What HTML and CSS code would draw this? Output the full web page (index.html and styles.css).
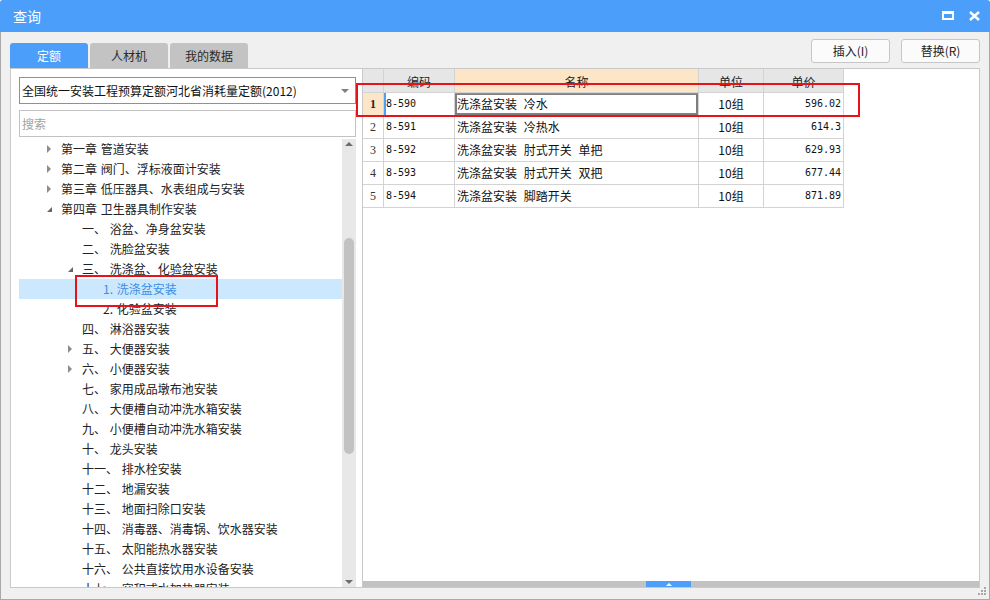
FILE: index.html
```html
<!DOCTYPE html>
<html lang="zh-CN">
<head>
<meta charset="utf-8">
<title>查询</title>
<link rel="stylesheet" href="styles.css">
</head>
<body>
<div class="window">
  <div class="titlebar">
    <span class="title">查询</span>
    <div class="wctrls">
      <svg class="ic-max" width="12" height="9" viewBox="0 0 12 9"><rect x="1" y="1" width="10" height="7" fill="none" stroke="#fff" stroke-width="2"/><rect x="0" y="0" width="12" height="3" fill="#fff"/></svg>
      <svg class="ic-close" width="11" height="10" viewBox="0 0 11 10"><path d="M1 1 L10 9 M10 1 L1 9" stroke="#fff" stroke-width="2.4" fill="none"/></svg>
    </div>
  </div>
  <div class="body">
    <div class="toolbar">
      <div class="tabs">
        <div class="tab active">定额</div>
        <div class="tab">人材机</div>
        <div class="tab">我的数据</div>
      </div>
      <div class="buttons">
        <button class="btn">插入(I)</button>
        <button class="btn">替换(R)</button>
      </div>
    </div>
    <div class="main">
      <div class="left">
        <div class="select"><span>全国统一安装工程预算定额河北省消耗量定额(2012)</span><i class="caret"></i></div>
        <div class="search">搜索</div>
        <div class="treewrap">
          <div class="tree">
            <div class="row l0"><i class="tg col"></i><span>第一章 管道安装</span></div>
            <div class="row l0"><i class="tg col"></i><span>第二章 阀门、浮标液面计安装</span></div>
            <div class="row l0"><i class="tg col"></i><span>第三章 低压器具、水表组成与安装</span></div>
            <div class="row l0"><i class="tg exp"></i><span>第四章 卫生器具制作安装</span></div>
            <div class="row l1"><i class="tg"></i><span>一、 浴盆、净身盆安装</span></div>
            <div class="row l1"><i class="tg"></i><span>二、 洗脸盆安装</span></div>
            <div class="row l1"><i class="tg exp"></i><span>三、 洗涤盆、化验盆安装</span></div>
            <div class="row l2 selected"><i class="tg"></i><span>1. 洗涤盆安装</span></div>
            <div class="row l2"><i class="tg"></i><span>2. 化验盆安装</span></div>
            <div class="row l1"><i class="tg"></i><span>四、 淋浴器安装</span></div>
            <div class="row l1"><i class="tg col"></i><span>五、 大便器安装</span></div>
            <div class="row l1"><i class="tg col"></i><span>六、 小便器安装</span></div>
            <div class="row l1"><i class="tg"></i><span>七、 家用成品墩布池安装</span></div>
            <div class="row l1"><i class="tg"></i><span>八、 大便槽自动冲洗水箱安装</span></div>
            <div class="row l1"><i class="tg"></i><span>九、 小便槽自动冲洗水箱安装</span></div>
            <div class="row l1"><i class="tg"></i><span>十、 龙头安装</span></div>
            <div class="row l1"><i class="tg"></i><span>十一、 排水栓安装</span></div>
            <div class="row l1"><i class="tg"></i><span>十二、 地漏安装</span></div>
            <div class="row l1"><i class="tg"></i><span>十三、 地面扫除口安装</span></div>
            <div class="row l1"><i class="tg"></i><span>十四、 消毒器、消毒锅、饮水器安装</span></div>
            <div class="row l1"><i class="tg"></i><span>十五、 太阳能热水器安装</span></div>
            <div class="row l1"><i class="tg"></i><span>十六、 公共直接饮用水设备安装</span></div>
            <div class="row l1"><i class="tg"></i><span>十七、 容积式水加热器安装</span></div>
          </div>
          <div class="vscroll">
            <i class="sb-up"></i>
            <div class="thumb"></div>
            <i class="sb-down"></i>
          </div>
        </div>
      </div>
      <div class="right">
        <div class="grid">
          <div class="hd"></div>
          <div class="hd">编码</div>
          <div class="hd hd-active">名称</div>
          <div class="hd">单位</div>
          <div class="hd">单价</div>

          <div class="c num cur">1</div>
          <div class="c code focus">8-590</div>
          <div class="c name sel">洗涤盆安装 冷水</div>
          <div class="c unit">10组</div>
          <div class="c price">596.02</div>

          <div class="c num">2</div>
          <div class="c code">8-591</div>
          <div class="c name">洗涤盆安装 冷热水</div>
          <div class="c unit">10组</div>
          <div class="c price">614.3</div>

          <div class="c num">3</div>
          <div class="c code">8-592</div>
          <div class="c name">洗涤盆安装 肘式开关 单把</div>
          <div class="c unit">10组</div>
          <div class="c price">629.93</div>

          <div class="c num">4</div>
          <div class="c code">8-593</div>
          <div class="c name">洗涤盆安装 肘式开关 双把</div>
          <div class="c unit">10组</div>
          <div class="c price">677.44</div>

          <div class="c num">5</div>
          <div class="c code">8-594</div>
          <div class="c name">洗涤盆安装 脚踏开关</div>
          <div class="c unit">10组</div>
          <div class="c price">871.89</div>
        </div>
        <div class="hbar"><div class="handle"><i class="handle-tri"></i></div></div>
      </div>
    </div>
  </div>
  <svg class="grip" width="9" height="9" viewBox="0 0 9 9">
    <rect x="6" y="0" width="2" height="2" fill="#a8a8a8"/>
    <rect x="3" y="3" width="2" height="2" fill="#a8a8a8"/>
    <rect x="6" y="3" width="2" height="2" fill="#a8a8a8"/>
    <rect x="0" y="6" width="2" height="2" fill="#a8a8a8"/>
    <rect x="3" y="6" width="2" height="2" fill="#a8a8a8"/>
    <rect x="6" y="6" width="2" height="2" fill="#a8a8a8"/>
  </svg>
  <div class="mark mark-row"></div>
  <div class="mark mark-tree"></div>
</div>
</body>
</html>
```
FILE: styles.css
```css
* { box-sizing: border-box; margin: 0; padding: 0; }
html, body { width: 990px; height: 600px; overflow: hidden; }
body {
  font-family: "Noto Sans CJK SC", "Microsoft YaHei", sans-serif;
  font-size: 12px;
  color: #222;
  background: #f0f0f0;
}
.window {
  position: relative;
  width: 990px;
  height: 600px;
  display: flex;
  flex-direction: column;
}
.titlebar {
  height: 32px;
  flex: none;
  background: #4b9ef9;
  color: #fff;
  display: flex;
  align-items: center;
  justify-content: space-between;
  padding: 0 10px 0 13px;
  border-radius: 3px 3px 0 0;
}
.title { font-size: 14px; line-height: 32px; }
.wctrls { display: flex; align-items: center; gap: 15px; }
.ic-max { margin-top: -1px; }

.body {
  flex: 1;
  display: flex;
  flex-direction: column;
  background: #f0f0f0;
  border: 1px solid #a9a9a9;
  border-top: 0;
}
.toolbar {
  height: 36px;
  flex: none;
  display: flex;
  justify-content: space-between;
  padding: 0 9px 0 9px;
}
.tabs { display: flex; align-items: flex-end; gap: 2px; }
.tab {
  width: 78px;
  height: 25px;
  line-height: 25px;
  text-align: center;
  background: #c3c3c3;
  color: #2a2a2a;
  border-radius: 3px 3px 0 0;
}
.tab.active { background: #4b9ef9; color: #fff; }
.buttons { display: flex; gap: 11px; padding-top: 7px; }
.btn {
  width: 79px;
  height: 24px;
  border: 1px solid #c6c6c6;
  border-radius: 3px;
  background: #fbfbfb;
  font: inherit;
  color: #222;
  line-height: 22px;
  text-align: center;
}

.main {
  height: 520px;
  flex: none;
  margin: 0 9px;
  display: flex;
  border: 1px solid #c9c9c9;
  background: #fff;
}
.left {
  width: 352px;
  flex: none;
  border-right: 1px solid #c9c9c9;
  padding: 8px 6px 0 8px;
  display: flex;
  flex-direction: column;
}
.select {
  height: 27px;
  flex: none;
  border: 1px solid #4b9ef9;
  display: flex;
  align-items: center;
  padding-left: 2px;
  color: #111;
  line-height: 25px;
}
.caret {
  margin-left: auto;
  margin-right: 6px;
  width: 0; height: 0;
  border-left: 4px solid transparent;
  border-right: 4px solid transparent;
  border-top: 4px solid #808080;
}
.search {
  height: 27px;
  flex: none;
  margin-top: 6px;
  border: 1px solid #c2c2c2;
  padding-left: 2px;
  line-height: 25px;
  color: #a3a3a3;
}
.treewrap {
  flex: 1;
  margin-top: 2px;
  display: flex;
  overflow: hidden;
  min-height: 0;
}
.tree { width: 323px; flex: none; overflow: hidden; word-spacing: 1px; }
.row {
  height: 20px;
  line-height: 20px;
  display: flex;
  align-items: center;
  white-space: nowrap;
  color: #222;
}
.row.l0 { padding-left: 27px; }
.row.l1 { padding-left: 48px; }
.row.l2 { padding-left: 69px; }
.row.selected { background: #cce8ff; color: #3b8ee2; }
.tg { width: 15px; height: 20px; flex: none; position: relative; }
.tg.col::before {
  content: "";
  position: absolute;
  left: 1px; top: 6px;
  border-top: 4px solid transparent;
  border-bottom: 4px solid transparent;
  border-left: 4px solid #8c8c8c;
}
.tg.exp::before {
  content: "";
  position: absolute;
  left: 1px; top: 8px;
  border-left: 5px solid transparent;
  border-bottom: 5px solid #666;
}
.vscroll {
  width: 14px;
  flex: none;
  background: #e8e8e8;
  display: flex;
  flex-direction: column;
  align-items: center;
}
.sb-up {
  margin-top: 3px;
  width: 0; height: 0;
  border-left: 4px solid transparent;
  border-right: 4px solid transparent;
  border-bottom: 4px solid #6e6e6e;
}
.thumb {
  width: 10px;
  height: 216px;
  margin-top: 92px;
  background: #c2c2c2;
  border-radius: 5px;
}
.sb-down {
  margin-top: auto;
  margin-bottom: 3px;
  width: 0; height: 0;
  border-left: 4px solid transparent;
  border-right: 4px solid transparent;
  border-top: 4px solid #6e6e6e;
}

.right {
  flex: 1;
  display: flex;
  flex-direction: column;
  min-width: 0;
}
.grid {
  display: grid;
  grid-template-columns: 21px 71px 244px 65px 80px;
  grid-template-rows: 24px repeat(5, 23px);
  width: 481px;
}
.hd, .c {
  border-right: 1px solid #d3d3d3;
  border-bottom: 1px solid #d3d3d3;
  white-space: nowrap;
  overflow: hidden;
}
.hd {
  background: #e6e6e6;
  text-align: center;
  line-height: 23px;
  padding-top: 1px;
  color: #222;
}
.hd.hd-active { background: #fde6c8; }
.c { line-height: 22px; color: #111; }
.num {
  text-align: center;
  font-family: "Liberation Serif", serif;
  font-size: 12px;
  color: #333;
}
.num.cur { background: #fde6c8; font-weight: bold; color: #222; }
.code {
  padding-left: 2px;
  font-family: "DejaVu Sans Mono", monospace;
  font-size: 10px;
}
.code.focus { box-shadow: inset 2px 0 0 #4b9ef9; }
.name { padding-left: 2px; word-spacing: 4px; }
.name.sel { box-shadow: inset 0 1px 0 #4b9ef9, inset 0 0 0 2px #7f7f7f; }
.unit { text-align: center; }
.price {
  text-align: right;
  padding-right: 2px;
  font-family: "DejaVu Sans Mono", monospace;
  font-size: 10px;
}
.hbar {
  margin-top: auto;
  height: 6px;
  background: #c2c2c2;
  display: flex;
}
.handle {
  margin-left: 283px;
  width: 45px;
  height: 6px;
  background: #4b9ef9;
  display: flex;
  justify-content: center;
  align-items: center;
}
.handle-tri {
  width: 0; height: 0;
  border-left: 3px solid transparent;
  border-right: 3px solid transparent;
  border-bottom: 3px solid #fff;
}
.grip { position: absolute; left: 978px; top: 587px; }
.mark {
  position: absolute;
  border: 2px solid #e5141b;
  pointer-events: none;
}
.mark-row { left: 356px; top: 83px; width: 504px; height: 34px; }
.mark-tree { left: 75px; top: 275px; width: 143px; height: 32px; }
```
